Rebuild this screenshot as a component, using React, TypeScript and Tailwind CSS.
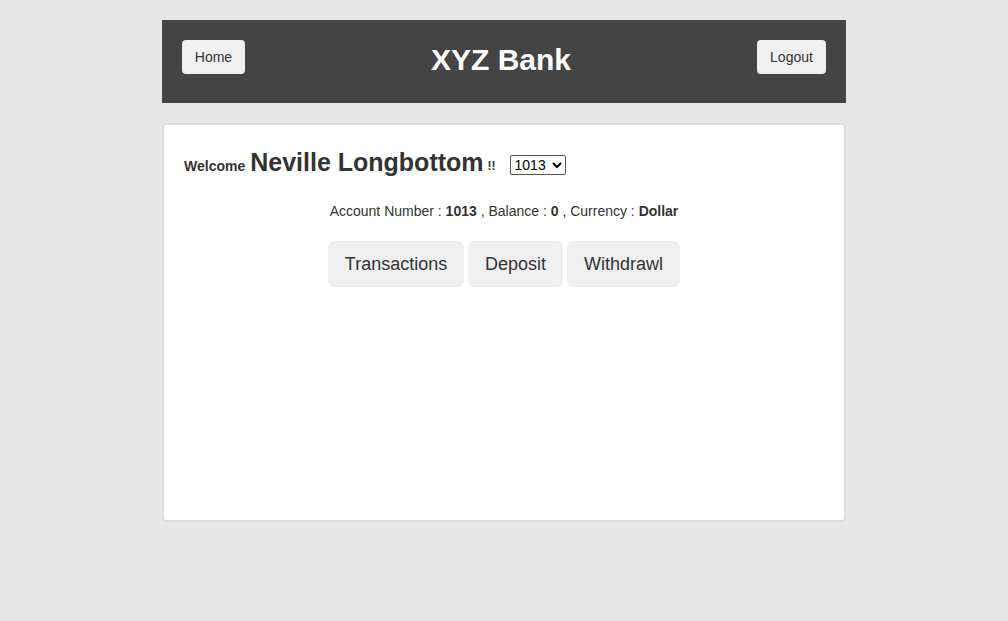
export default function App() {
  return (
    <div className="min-h-[621px] bg-[#e7e7e7] pt-5 font-['Liberation_Sans',Arial,sans-serif] text-[#333]">
      <div className="mx-auto w-[684px]">
        <header className="flex h-[83px] items-start justify-between bg-[#444] px-5 pt-5">
          <button className="h-[34px] w-[63px] rounded-[4px] bg-[#f0f0f0] text-sm text-[#333]">Home</button>
          <h1 className="mt-[3px] text-[30px] leading-[34px] font-bold text-white">XYZ Bank</h1>
          <button className="h-[34px] w-[69px] rounded-[4px] bg-[#f0f0f0] text-sm text-[#333]">Logout</button>
        </header>

        <div className="mt-5 h-[399px] rounded-[4px] border-2 border-[#ddd] bg-white px-5 pt-[19px]">
          <div className="flex items-center">
            <span className="mt-[6px] text-sm font-bold">Welcome</span>
            <span className="ml-[5px] text-[25px] font-bold">Neville Longbottom</span>
            <span className="ml-[4px] mt-[6px] text-xs font-bold">!!</span>
            <select className="ml-[14px] mt-[4px] h-[20px] w-[56px] rounded-[2px] border border-[#555] text-sm text-black" defaultValue="1013">
              <option>1013</option>
              <option>1014</option>
              <option>1015</option>
            </select>
          </div>

          <div className="mt-[19px] text-center text-sm">
            Account Number : <strong>1013</strong> , Balance : <strong>0</strong> , Currency : <strong>Dollar</strong>
          </div>

          <div className="mt-[20px] flex justify-center gap-1">
            <button className="h-[46px] w-[136px] rounded-[6px] bg-[#efefef] text-lg">Transactions</button>
            <button className="h-[46px] w-[95px] rounded-[6px] bg-[#efefef] text-lg">Deposit</button>
            <button className="h-[46px] w-[113px] rounded-[6px] bg-[#efefef] text-lg">Withdrawl</button>
          </div>
        </div>
      </div>
    </div>
  );
}
